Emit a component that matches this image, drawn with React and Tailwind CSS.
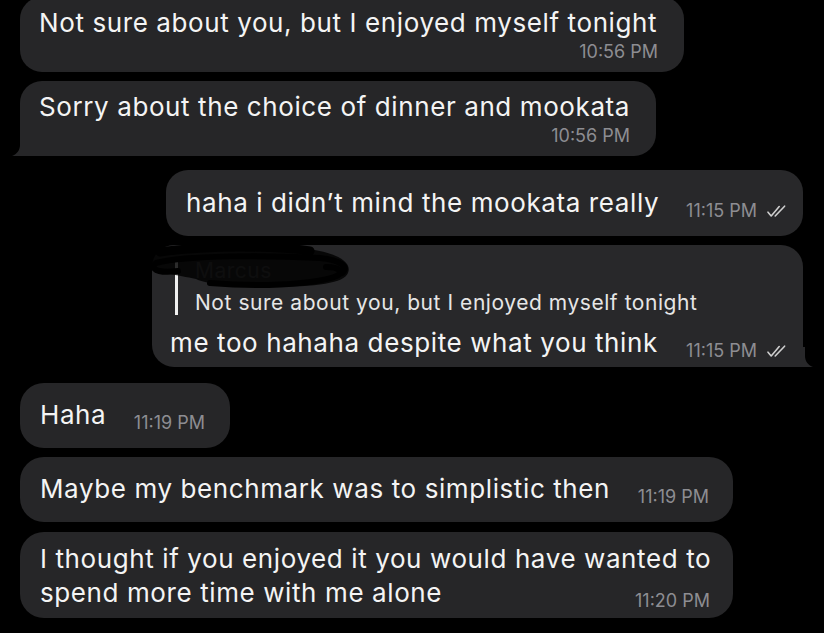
import React from "react";

const Check = () => (
  <svg width="22" height="13" viewBox="0 0 22 13" fill="none" className="mb-[1px] ml-[9px] shrink-0">
    <path d="M2 7.2 L5.2 11 L13.2 1.6" stroke="#cfcfcf" strokeWidth="1.6" strokeLinecap="round" strokeLinejoin="round" />
    <path d="M9.2 11 L18.6 1.2" stroke="#cfcfcf" strokeWidth="1.6" strokeLinecap="round" />
  </svg>
);

const TailLeft = () => (
  <svg width="16" height="20" viewBox="0 0 16 20" className="absolute left-[-8px] bottom-0">
    <path d="M8 0 L8 9 C8 14 5 18 0 20 L16 20 L16 0 Z" fill="#262628" />
  </svg>
);

const TailRight = () => (
  <svg width="16" height="20" viewBox="0 0 16 20" className="absolute right-[-10px] bottom-0">
    <path d="M8 0 L8 9 C8 14 11 18 16 20 L0 20 L0 0 Z" fill="#28282a" />
  </svg>
);

const main = "whitespace-nowrap text-[26px] tracking-[0.6px]";
const ts = "text-[18px] text-[#8d8d92]";

export default function App() {
  return (
    <div className="flex h-[633px] w-[824px] flex-col overflow-hidden bg-black font-['Inter',sans-serif] text-[#f4f4f4]">
      {/* 1 */}
      <div className="-mt-[3px] ml-[20px] w-[664px] rounded-[22px] bg-[#262628] pb-[10px] pl-[19px] pr-[26px] pt-[10px]">
        <div className={`${main} leading-[32px]`}>Not sure about you, but I enjoyed myself tonight</div>
        <div className={`${ts} mt-[3px] text-right leading-[20px]`}>10:56 PM</div>
      </div>
      {/* 2 */}
      <div className="relative ml-[20px] mt-[9px] w-[636px] rounded-[22px] rounded-bl-none bg-[#262628] pb-[10px] pl-[19px] pr-[26px] pt-[10px]">
        <div className={`${main} leading-[32px]`}>Sorry about the choice of dinner and mookata</div>
        <div className={`${ts} mt-[3px] text-right leading-[20px]`}>10:56 PM</div>
        <TailLeft />
      </div>
      {/* 3 */}
      <div className="mr-[21px] mt-[14px] flex w-[637px] items-end justify-between self-end rounded-[22px] bg-[#28282a] pb-[17px] pl-[20px] pr-[15px] pt-[17px]">
        <span className={`${main} leading-[32px]`}>haha i didn’t mind the mookata really</span>
        <span className="flex items-end">
          <span className={`${ts} leading-[16px]`}>11:15 PM</span>
          <Check />
        </span>
      </div>
      {/* 4 */}
      <div className="relative mr-[21px] mt-[9px] w-[651px] self-end rounded-[22px] rounded-br-none bg-[#28282a] pb-[8px] pl-[18px] pr-[15px] pt-[14px]">
        <div className="ml-[5px] flex">
          <div className="w-[3px] bg-[#f0f0f0]" />
          <div className="pl-[17px]">
            <div className="text-[21px] leading-[24px] tracking-[0.5px] text-[#4e4e50]">Marcus</div>
            <div className="mt-[8px] whitespace-nowrap text-[21px] leading-[24px] tracking-[0.55px] text-[#e6e6e6]">Not sure about you, but I enjoyed myself tonight</div>
          </div>
        </div>
        <div className="mt-[12px] flex items-end justify-between">
          <span className={`${main} leading-[32px]`}>me too hahaha despite what you think</span>
          <span className="flex items-end">
            <span className={`${ts} leading-[16px]`}>11:15 PM</span>
            <Check />
          </span>
        </div>
        <svg width="212" height="50" viewBox="0 0 212 50" className="absolute left-[-4px] top-[-2px]" fill="none">
          <path d="M10 10 C 50 2, 120 2, 160 6 C 185 9, 205 18, 200 30 C 196 40, 170 44, 120 44 C 90 44, 60 42, 48 36 C 30 32, 8 30, 4 22 C 2 16, 4 12, 10 10 Z" fill="#000" opacity="0.82" />
          <path d="M12 9 C 60 2, 130 3, 162 8" stroke="#000" strokeWidth="9" strokeLinecap="round" />
          <path d="M8 20 C 40 12, 120 12, 172 15 C 192 17, 202 24, 194 30" stroke="#000" strokeWidth="6" strokeLinecap="round" />
          <path d="M62 40 C 110 44, 160 42, 186 34 C 198 30, 192 24, 178 24" stroke="#000" strokeWidth="6" strokeLinecap="round" />
          <path d="M6 22 C 4 28, 14 30, 30 28" stroke="#000" strokeWidth="6" strokeLinecap="round" />
        </svg>
        <TailRight />
      </div>
      {/* 5 */}
      <div className="ml-[20px] mt-[16px] flex w-[210px] items-end justify-between rounded-[24px] bg-[#262628] pb-[17px] pl-[20px] pr-[25px] pt-[16px]">
        <span className={`${main} leading-[32px]`}>Haha</span>
        <span className={`${ts} leading-[16px]`}>11:19 PM</span>
      </div>
      {/* 6 */}
      <div className="ml-[20px] mt-[9px] flex w-[713px] items-end justify-between rounded-[24px] bg-[#262628] pb-[17px] pl-[20px] pr-[24px] pt-[16px]">
        <span className={`${main} leading-[32px]`}>Maybe my benchmark was to simplistic then</span>
        <span className={`${ts} leading-[16px]`}>11:19 PM</span>
      </div>
      {/* 7 */}
      <div className="ml-[20px] mt-[10px] w-[713px] rounded-[24px] bg-[#262628] pb-[8px] pl-[20px] pr-[23px] pt-[10px]">
        <div className={`${main} leading-[34px]`}>I thought if you enjoyed it you would have wanted to</div>
        <div className="flex items-end justify-between">
          <span className={`${main} leading-[34px]`}>spend more time with me alone</span>
          <span className={`${ts} leading-[18px]`}>11:20 PM</span>
        </div>
      </div>
    </div>
  );
}
